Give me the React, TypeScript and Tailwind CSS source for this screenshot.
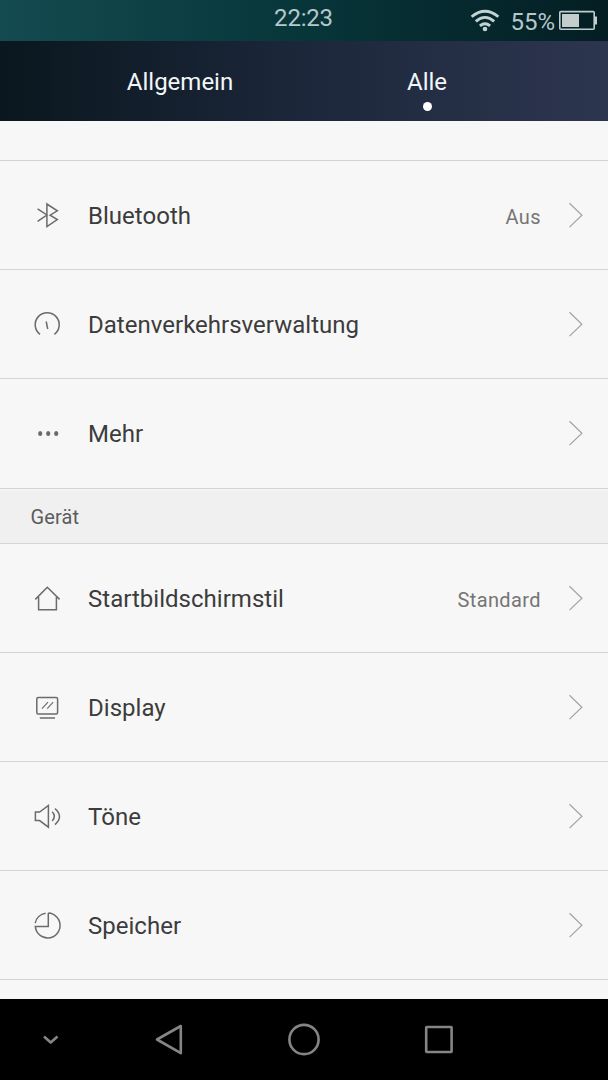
import type { ReactNode } from "react"

interface SettingItem {
    title: string,
    icon: ReactNode,
    value?: string,
    className?: string
}

const connectionItems: SettingItem[] = [
    {
        title: 'Bluetooth',
        value: 'Aus',
        icon: <path d="M6.6 9.8 15.9 16 6.6 22.4M15.9 5v22.6l10.4-7-7.2-4.4 7.2-4.4Z" />
    },
    {
        title: 'Datenverkehrsverwaltung',
        icon: <path d="M9 26.3A12 12 0 1 1 23.4 26.3M15.2 13.5l1.5 7.5" />
    },
    {
        title: 'Mehr',
        className: 'h-[110px] pb-px',
        icon: (
            <g fill="#6b6b6b" stroke="none">
                <ellipse cx="9.2" cy="16.6" rx="2.1" ry="2.5" />
                <ellipse cx="17.2" cy="16.6" rx="2.1" ry="2.5" />
                <ellipse cx="25.2" cy="16.6" rx="2.1" ry="2.5" />
            </g>
        )
    }
]

const deviceItems: SettingItem[] = [
    {
        title: 'Startbildschirmstil',
        value: 'Standard',
        icon: <path d="M4.3 17.4 16.3 5.2l12.3 12.2M7.6 15V27.8h17.8V15" />
    },
    {
        title: 'Display',
        icon: (
            <>
                <rect x="5.8" y="6.4" width="20.8" height="16.6" rx="1.5" />
                <path d="M8.8 27H24" />
                <path strokeWidth="1.1" d="m11 17.7 6-6.6M16.2 17.7l6-6.6" />
            </>
        )
    },
    {
        title: 'Töne',
        icon: <path d="M4.4 12h4.2l8.8-6.6v21.8l-8.8-6.6H4.4ZM21.2 11.8q4.4 4.6 0 9.2M24 8.6q9 7.8 0 16" />
    },
    {
        title: 'Speicher',
        icon: <path d="M17.3 4.1V17.4H4.3a12.4 12.4 0 1 0 13-13.3M4.2 14.2A12.4 12.4 0 0 1 14.6 4.3" />
    }
]

const App = () => {
    return (
        <div className="flex h-[1080px] w-[608px] flex-col overflow-hidden bg-[#f7f7f7] font-[Roboto,sans-serif]">
            <StatusBar />
            <Tabs />
            <main className="flex-1">
                <div className="h-10 border-b border-[#d4d4d4]" />
                {connectionItems.map((item) => (
                    <SettingRow key={item.title} item={item} />
                ))}
                <h2 className="flex h-[55px] items-center border-t-2 border-b border-t-[#f5f5f5] border-b-[#d4d4d4] bg-[#f0f0f0] pl-[30.5px] text-[20px] tracking-[0.1px] text-[#5c5c5c]">
                    Gerät
                </h2>
                {deviceItems.map((item) => (
                    <SettingRow key={item.title} item={item} />
                ))}
            </main>
            <NavigationBar />
        </div>
    )
}

export default App

const StatusBar = () => {
    return (
        <header className="grid h-[41px] grid-cols-3 bg-linear-to-r from-[#144b50] via-[#07363a] to-[#041e23] text-[24px] text-[#b5c8ca]">
            <div className="col-start-2 pt-[3px] pr-px text-center leading-[30px] tracking-[-0.2px]">22:23</div>
            <div className="flex items-start justify-end pr-[11px]">
                <svg className="mt-[9px] h-[23px] w-[30px]" viewBox="0 0 30 23" fill="none" stroke="#c3d3d4" strokeWidth="2.8">
                    <path d="M1.6 7.8q13.4-11.2 26.8 0M5.8 12.4q9.2-8 18.4 0M9.9 16.8q5.1-4.2 10.2 0" />
                    <circle cx="15" cy="20" r="2.3" fill="#c3d3d4" stroke="none" />
                </svg>
                <span className="ml-[10px] pt-[7px] leading-[30px]">55%</span>
                <svg className="ml-1 mt-[10px] h-5 w-[38px]" viewBox="0 0 38 20" fill="none">
                    <rect x="0.8" y="1.6" width="34.4" height="17.6" rx="1" stroke="#bccdcf" strokeWidth="1.6" />
                    <path fill="#c4cccd" d="M3 3.9h17v13H3zM35.5 6.5H38v8h-2.5z" />
                </svg>
            </div>
        </header>
    )
}

const Tabs = () => {
    return (
        <nav className="flex h-20 bg-linear-to-r from-[#0a171e] via-[#1c273b] to-[#2d364f] text-[24px] leading-[30px] text-[#f3f6f8]">
            <div className="ml-14 w-[248px] pt-[26px] text-center">Allgemein</div>
            <div className="flex w-[246px] flex-col items-center pt-[26px]">
                Alle
                <span className="mt-[5px] size-[9px] rounded-full bg-white" />
            </div>
        </nav>
    )
}

const SettingRow = ({ item }: { item: SettingItem }) => {
    return (
        <div className={`flex items-center border-b border-[#d4d4d4] pl-[31px] pr-6 text-[#3c3c3c] ${item.className ?? 'h-[109px]'}`}>
            <svg className="size-8" viewBox="0 0 32 32" fill="none" stroke="#6b6b6b" strokeWidth="1.5">
                {item.icon}
            </svg>
            <span className="ml-[25px] flex-1 pt-0.5 text-[24px] tracking-[0.02px]">{item.title}</span>
            <span className="mr-[27px] pt-[3px] text-[20px] tracking-[0.4px] text-[#757575]">{item.value}</span>
            <svg className="h-7 w-4" viewBox="0 0 16 28" fill="none" stroke="#a3a3a3" strokeWidth="1.2">
                <path d="m1.5 2.3 12.4 11.9-12.4 11.9" />
            </svg>
        </div>
    )
}

const NavigationBar = () => {
    return (
        <footer className="h-[81px] bg-black">
            <svg className="h-full w-full" viewBox="0 0 608 81" fill="none" stroke="#858585" strokeWidth="2.6" strokeLinejoin="round">
                <path d="m44 37.5 6.7 6 6.8-6" />
                <path d="M157 40.5 180.8 27v27.2Z" />
                <circle cx="304" cy="40.5" r="14.6" />
                <rect x="426.2" y="28" width="25.4" height="25" rx="0.5" />
            </svg>
        </footer>
    )
}
